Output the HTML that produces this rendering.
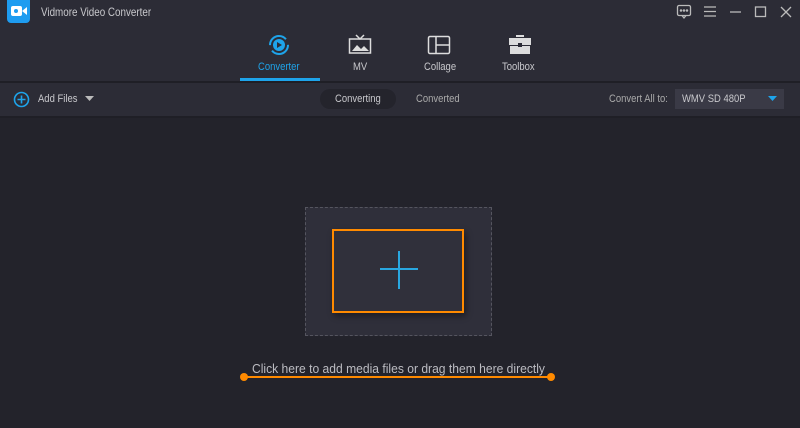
<!DOCTYPE html>
<html><head><style>
body{margin:0;width:800px;height:428px;background:#23232b;font-family:"Liberation Sans",sans-serif;position:relative;overflow:hidden}
.a{position:absolute}
.t{color:#c8c8cc;font-size:11px;transform:scaleX(.86);transform-origin:left top;white-space:nowrap}
</style></head><body>
<div class="a" style="left:0;top:0;width:800px;height:81px;background:#2c2c36"></div>
<div class="a" style="left:0;top:81px;width:800px;height:2px;background:#1f1f26"></div>
<div class="a" style="left:0;top:83px;width:800px;height:33px;background:#2c2c36"></div>
<div class="a" style="left:0;top:116px;width:800px;height:2px;background:#1f1f26"></div>
<div class="a" style="left:7px;top:0;width:23px;height:23px;background:#1e9cf0;border-radius:0 0 4px 4px"></div>
<svg class="a" style="left:10px;top:4px" width="18" height="14"><rect x="1" y="2" width="11" height="10" rx="2" fill="#fff"/><path d="M12 7 L17 3 V11 Z" fill="#fff"/><circle cx="6" cy="7" r="2" fill="#1e9cf0"/></svg>
<div class="a t" style="left:41px;top:5px;font-size:12px;transform:scaleX(.82)">Vidmore Video Converter</div>
<svg class="a" style="left:676px;top:4px" width="120" height="16" fill="none" stroke="#bbb" stroke-width="1.3">
<rect x="1.5" y="1.5" width="13" height="10" rx="1.5"/><path d="M6 11.5 L8 14 L10 11.5"/><circle cx="5" cy="6.5" r=".6" fill="#bbb"/><circle cx="8" cy="6.5" r=".6" fill="#bbb"/><circle cx="11" cy="6.5" r=".6" fill="#bbb"/>
<path d="M28 3h12M28 7.5h12M28 12h12"/>
<path d="M54 8h11"/>
<rect x="79.5" y="3" width="10" height="9.5"/>
<path d="M105 3l10 10M115 3l-10 10"/>
</svg>
<svg class="a" style="left:267px;top:33px" width="24" height="24"><circle cx="12" cy="12" r="9" fill="none" stroke="#1ea4ea" stroke-width="2" stroke-dasharray="22 6"/><circle cx="12" cy="12" r="6" fill="#1ea4ea"/><path d="M10 9 L15 12 L10 15Z" fill="#2c2c36"/></svg>
<div class="a t" style="left:258px;top:61px;color:#1ea4ea">Converter</div>
<div class="a" style="left:240px;top:78px;width:80px;height:3px;background:#1ea4ea"></div>
<svg class="a" style="left:348px;top:33px" width="24" height="22" fill="none" stroke="#ddd" stroke-width="1.5"><path d="M8 2l4 4 4-4"/><rect x="1.5" y="6" width="21" height="14"/><path d="M4 18l5-6 4 4 3-3 5 5z" fill="#ddd" stroke="none"/></svg>
<div class="a t" style="left:353px;top:61px">MV</div>
<svg class="a" style="left:427px;top:35px" width="24" height="20" fill="none" stroke="#ddd" stroke-width="1.5"><rect x="1.5" y="1.5" width="21" height="17" rx="1.5"/><path d="M9 1.5v17M9 10h13.5"/></svg>
<div class="a t" style="left:424px;top:61px">Collage</div>
<svg class="a" style="left:509px;top:35px" width="22" height="20" fill="#ddd"><rect x="7" y="0" width="8" height="2"/><rect x="0" y="3" width="22" height="7"/><rect x="1" y="11" width="20" height="8"/><rect x="9" y="8" width="4" height="4" fill="#2c2c36"/></svg>
<div class="a t" style="left:502px;top:61px">Toolbox</div>
<svg class="a" style="left:13px;top:91px" width="17" height="17" fill="none" stroke="#1ea4ea" stroke-width="1.6"><circle cx="8.5" cy="8.5" r="7"/><path d="M8.5 4.5v8M4.5 8.5h8"/></svg>
<div class="a t" style="left:38px;top:93px">Add Files</div>
<svg class="a" style="left:85px;top:96px" width="9" height="6"><path d="M0 0h9L4.5 5z" fill="#bbb"/></svg>
<div class="a" style="left:320px;top:89px;width:76px;height:20px;border-radius:10px;background:#24242c"></div>
<div class="a t" style="left:335px;top:93px">Converting</div>
<div class="a t" style="left:416px;top:93px;color:#aaa">Converted</div>
<div class="a t" style="left:609px;top:93px;color:#aaa">Convert All to:</div>
<div class="a" style="left:675px;top:89px;width:109px;height:20px;background:#3a3a46"></div>
<div class="a t" style="left:682px;top:93px">WMV SD 480P</div>
<svg class="a" style="left:768px;top:96px" width="9" height="6"><path d="M0 0h9L4.5 5z" fill="#1ea4ea"/></svg>
<div class="a" style="left:305px;top:207px;width:185px;height:127px;background:#2f2f3a;border:1px dashed #55555f"></div>
<div class="a" style="left:332px;top:229px;width:128px;height:80px;border:2px solid #ff8a00;box-shadow:2px 3px 6px rgba(0,0,0,.4);background:#30303b"></div>
<div class="a" style="left:380px;top:268px;width:38px;height:2px;background:#29a7e0"></div>
<div class="a" style="left:398px;top:251px;width:2px;height:38px;background:#29a7e0"></div>
<div class="a t" style="left:252px;top:361px;color:#bcbcc2;font-size:13px;transform:scaleX(.93)">Click here to add media files or drag them here directly</div>
<div class="a" style="left:244px;top:376px;width:307px;height:2px;background:#ff8a00"></div>
<div class="a" style="left:240px;top:373px;width:8px;height:8px;border-radius:50%;background:#ff8a00"></div>
<div class="a" style="left:547px;top:373px;width:8px;height:8px;border-radius:50%;background:#ff8a00"></div>
</body></html>
